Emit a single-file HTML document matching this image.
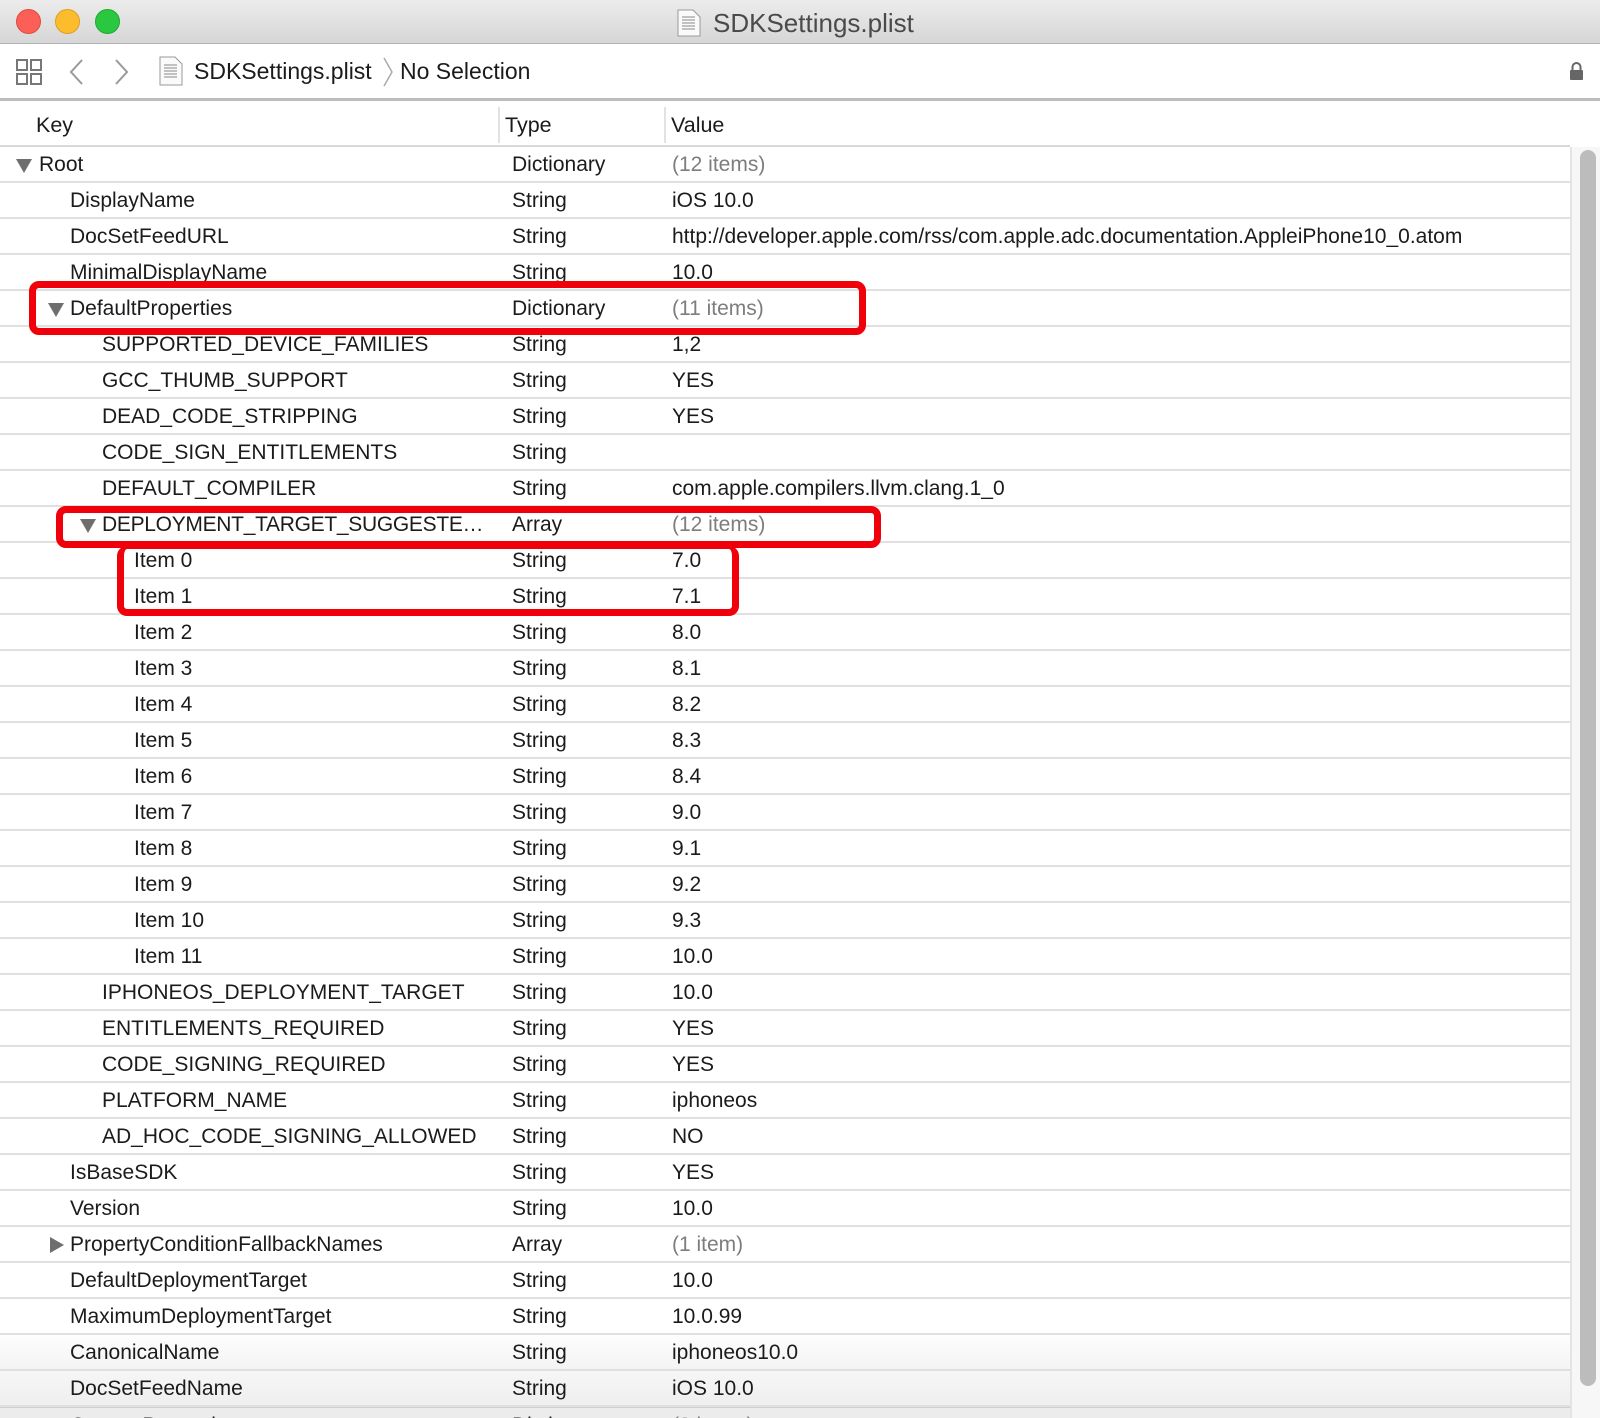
<!DOCTYPE html>
<html><head><meta charset="utf-8"><style>
*{margin:0;padding:0;box-sizing:border-box}
body{width:1600px;height:1418px;overflow:hidden;background:#fff;font-family:"Liberation Sans",sans-serif;color:#1b1b1b;position:relative}
.tb{position:absolute;left:0;top:0;width:1600px;height:44px;background:linear-gradient(#ececec,#d6d6d6);border-bottom:1px solid #b4b4b4}
.dot{position:absolute;top:9px;width:25px;height:25px;border-radius:50%}
.title{position:absolute;top:8px;left:713px;font-size:26px;color:#4a4a4a}
.tool{position:absolute;left:0;top:44px;width:1600px;height:57px;background:#fff;border-bottom:3px solid #bdbdbd}
.hdr{position:absolute;left:0;top:101px;width:1570px;height:46px;border-bottom:2px solid #d9d9d9;font-size:21.5px}
.hdr span{position:absolute;top:12px}
.sep{position:absolute;top:6px;width:2px;height:36px;background:#e2e2e2}
.tbl{position:absolute;left:0;top:147px;width:1570px;height:1271px;overflow:hidden}
.r{position:absolute;left:0;width:1570px;height:36px;border-bottom:2px solid #e0e0e0;font-size:21px;line-height:36px;white-space:nowrap}
.r span{position:absolute;top:0}
.t{left:512px}.v{left:672px}
.g{color:#7d7d7d}
.tri{position:absolute;top:12px;width:0;height:0;border-left:8px solid transparent;border-right:8px solid transparent;border-top:14px solid #6e6e6e}
.trc{position:absolute;top:10px;width:0;height:0;border-top:8px solid transparent;border-bottom:8px solid transparent;border-left:14px solid #6e6e6e}
.box{position:absolute;border:7px solid #f0000a;border-radius:10px}
.sb{position:absolute;left:1570px;top:147px;width:30px;height:1271px;background:#f7f7f7;border-left:2px solid #e4e4e4}
.th{position:absolute;left:8px;top:3px;width:16px;height:1236px;background:#bcbcbc;border-radius:8px}
</style></head><body>
<div class="tb">
<div class="dot" style="left:16px;background:#fc5f57;border:1px solid #de4a42"></div>
<div class="dot" style="left:55px;background:#fdbc2e;border:1px solid #dd9f20"></div>
<div class="dot" style="left:95px;background:#2ac840;border:1px solid #1fa82f"></div>
<svg style="position:absolute;left:677px;top:9px" width="24" height="28" viewBox="0 0 24 28"><path d="M1 1h15l7 7v19H1z" fill="#fafafa" stroke="#999"/><path d="M5 8h13M5 11h13M5 14h13M5 17h13M5 20h13" stroke="#888"/></svg>
<div class="title">SDKSettings.plist</div>
</div>
<div class="tool">
<svg style="position:absolute;left:16px;top:15px" width="26" height="26" viewBox="0 0 26 26" fill="none" stroke="#777" stroke-width="2"><rect x="1" y="1" width="10" height="10"/><rect x="15" y="1" width="10" height="10"/><rect x="1" y="15" width="10" height="10"/><rect x="15" y="15" width="10" height="10"/></svg>
<svg style="position:absolute;left:68px;top:14px" width="16" height="28" viewBox="0 0 16 28" fill="none" stroke="#999" stroke-width="2"><path d="M14 2L3 14l11 12"/></svg>
<svg style="position:absolute;left:114px;top:14px" width="16" height="28" viewBox="0 0 16 28" fill="none" stroke="#999" stroke-width="2"><path d="M2 2l11 12L2 26"/></svg>
<svg style="position:absolute;left:159px;top:12px" width="24" height="30" viewBox="0 0 24 30"><path d="M1 1h15l7 7v21H1z" fill="#fafafa" stroke="#999"/><path d="M5 9h13M5 12h13M5 15h13M5 18h13M5 21h13" stroke="#888"/></svg>
<div style="position:absolute;left:194px;top:14px;font-size:23px">SDKSettings.plist</div>
<svg style="position:absolute;left:382px;top:12px" width="12" height="32" viewBox="0 0 12 32" fill="none" stroke="#aaa" stroke-width="1.5"><path d="M2 2l8 14-8 14"/></svg>
<div style="position:absolute;left:400px;top:14px;font-size:23px">No Selection</div>
<svg style="position:absolute;left:1569px;top:17px" width="15" height="20" viewBox="0 0 15 20"><path d="M3.5 9V6a4 4 0 0 1 8 0v3" fill="none" stroke="#666" stroke-width="2"/><rect x="1" y="9" width="13" height="10" rx="1" fill="#666"/></svg>
</div>
<div class="hdr"><span style="left:36px">Key</span><div class="sep" style="left:498px"></div><span style="left:505px">Type</span><div class="sep" style="left:664px"></div><span style="left:671px">Value</span></div>
<div class="tbl">
<div class="r" style="top:0"><i class="tri" style="left:16px"></i><span style="left:39px">Root</span><span class="t">Dictionary</span><span class="v g">(12 items)</span></div>
<div class="r" style="top:36px"><span style="left:70px">DisplayName</span><span class="t">String</span><span class="v">iOS 10.0</span></div>
<div class="r" style="top:72px"><span style="left:70px">DocSetFeedURL</span><span class="t">String</span><span class="v">http://developer.apple.com/rss/com.apple.adc.documentation.AppleiPhone10_0.atom</span></div>
<div class="r" style="top:108px"><span style="left:70px">MinimalDisplayName</span><span class="t">String</span><span class="v">10.0</span></div>
<div class="r" style="top:144px"><i class="tri" style="left:48px"></i><span style="left:70px">DefaultProperties</span><span class="t">Dictionary</span><span class="v g">(11 items)</span></div>
<div class="r" style="top:180px"><span style="left:102px">SUPPORTED_DEVICE_FAMILIES</span><span class="t">String</span><span class="v">1,2</span></div>
<div class="r" style="top:216px"><span style="left:102px">GCC_THUMB_SUPPORT</span><span class="t">String</span><span class="v">YES</span></div>
<div class="r" style="top:252px"><span style="left:102px">DEAD_CODE_STRIPPING</span><span class="t">String</span><span class="v">YES</span></div>
<div class="r" style="top:288px"><span style="left:102px">CODE_SIGN_ENTITLEMENTS</span><span class="t">String</span></div>
<div class="r" style="top:324px"><span style="left:102px">DEFAULT_COMPILER</span><span class="t">String</span><span class="v">com.apple.compilers.llvm.clang.1_0</span></div>
<div class="r" style="top:360px"><i class="tri" style="left:80px"></i><span style="left:102px;letter-spacing:-0.3px">DEPLOYMENT_TARGET_SUGGESTE…</span><span class="t">Array</span><span class="v g">(12 items)</span></div>
<div class="r" style="top:396px"><span style="left:134px">Item 0</span><span class="t">String</span><span class="v">7.0</span></div>
<div class="r" style="top:432px"><span style="left:134px">Item 1</span><span class="t">String</span><span class="v">7.1</span></div>
<div class="r" style="top:468px"><span style="left:134px">Item 2</span><span class="t">String</span><span class="v">8.0</span></div>
<div class="r" style="top:504px"><span style="left:134px">Item 3</span><span class="t">String</span><span class="v">8.1</span></div>
<div class="r" style="top:540px"><span style="left:134px">Item 4</span><span class="t">String</span><span class="v">8.2</span></div>
<div class="r" style="top:576px"><span style="left:134px">Item 5</span><span class="t">String</span><span class="v">8.3</span></div>
<div class="r" style="top:612px"><span style="left:134px">Item 6</span><span class="t">String</span><span class="v">8.4</span></div>
<div class="r" style="top:648px"><span style="left:134px">Item 7</span><span class="t">String</span><span class="v">9.0</span></div>
<div class="r" style="top:684px"><span style="left:134px">Item 8</span><span class="t">String</span><span class="v">9.1</span></div>
<div class="r" style="top:720px"><span style="left:134px">Item 9</span><span class="t">String</span><span class="v">9.2</span></div>
<div class="r" style="top:756px"><span style="left:134px">Item 10</span><span class="t">String</span><span class="v">9.3</span></div>
<div class="r" style="top:792px"><span style="left:134px">Item 11</span><span class="t">String</span><span class="v">10.0</span></div>
<div class="r" style="top:828px"><span style="left:102px">IPHONEOS_DEPLOYMENT_TARGET</span><span class="t">String</span><span class="v">10.0</span></div>
<div class="r" style="top:864px"><span style="left:102px">ENTITLEMENTS_REQUIRED</span><span class="t">String</span><span class="v">YES</span></div>
<div class="r" style="top:900px"><span style="left:102px">CODE_SIGNING_REQUIRED</span><span class="t">String</span><span class="v">YES</span></div>
<div class="r" style="top:936px"><span style="left:102px">PLATFORM_NAME</span><span class="t">String</span><span class="v">iphoneos</span></div>
<div class="r" style="top:972px"><span style="left:102px">AD_HOC_CODE_SIGNING_ALLOWED</span><span class="t">String</span><span class="v">NO</span></div>
<div class="r" style="top:1008px"><span style="left:70px">IsBaseSDK</span><span class="t">String</span><span class="v">YES</span></div>
<div class="r" style="top:1044px"><span style="left:70px">Version</span><span class="t">String</span><span class="v">10.0</span></div>
<div class="r" style="top:1080px"><i class="trc" style="left:50px"></i><span style="left:70px">PropertyConditionFallbackNames</span><span class="t">Array</span><span class="v g">(1 item)</span></div>
<div class="r" style="top:1116px"><span style="left:70px">DefaultDeploymentTarget</span><span class="t">String</span><span class="v">10.0</span></div>
<div class="r" style="top:1152px"><span style="left:70px">MaximumDeploymentTarget</span><span class="t">String</span><span class="v">10.0.99</span></div>
<div class="r" style="top:1188px;background:linear-gradient(#fdfdfd,#f4f4f4)"><span style="left:70px">CanonicalName</span><span class="t">String</span><span class="v">iphoneos10.0</span></div>
<div class="r" style="top:1224px;background:linear-gradient(#f6f6f6,#efefef)"><span style="left:70px">DocSetFeedName</span><span class="t">String</span><span class="v">iOS 10.0</span></div>
<div class="r" style="top:1260px;background:#ececec;border-top:1px solid #cfcfcf"><i class="trc" style="left:50px"></i><span style="left:70px">CustomProperties</span><span class="t">Dictionary</span><span class="v g">(2 items)</span></div>
</div>
<div class="sb"><div class="th"></div></div>
<div class="box" style="left:29px;top:281px;width:837px;height:54px"></div>
<div class="box" style="left:56px;top:506px;width:825px;height:42px"></div>
<div class="box" style="left:117px;top:546px;width:622px;height:70px;border-top-width:3px"></div>
</body></html>
